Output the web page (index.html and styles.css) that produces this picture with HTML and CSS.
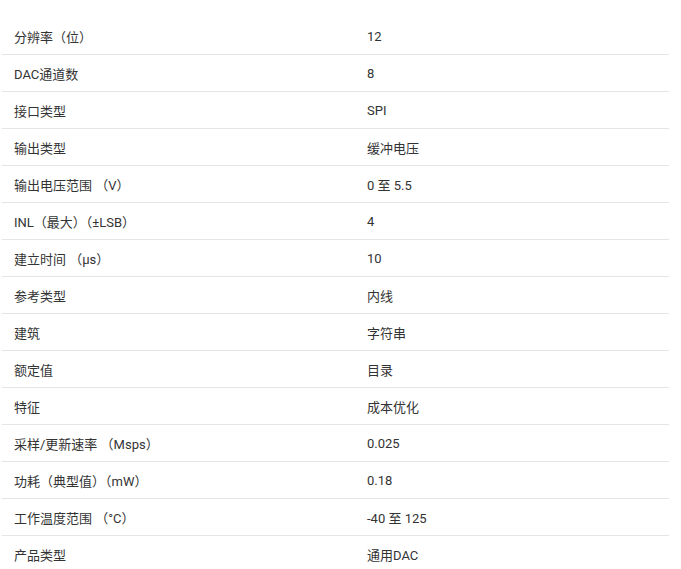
FILE: index.html
```html
<!DOCTYPE html>
<html lang="zh-CN">
<head>
<meta charset="utf-8">
<link rel="stylesheet" href="styles.css">
</head>
<body>
<div class="spec-table">
  <div class="row"><div class="label">分辨率（位）</div><div class="value">12</div></div>
  <div class="row"><div class="label">DAC通道数</div><div class="value">8</div></div>
  <div class="row"><div class="label">接口类型</div><div class="value">SPI</div></div>
  <div class="row"><div class="label">输出类型</div><div class="value">缓冲电压</div></div>
  <div class="row"><div class="label">输出电压范围 （V）</div><div class="value">0 至 5.5</div></div>
  <div class="row"><div class="label">INL（最大）（±LSB）</div><div class="value">4</div></div>
  <div class="row"><div class="label">建立时间 （μs）</div><div class="value">10</div></div>
  <div class="row"><div class="label">参考类型</div><div class="value">内线</div></div>
  <div class="row"><div class="label">建筑</div><div class="value">字符串</div></div>
  <div class="row"><div class="label">额定值</div><div class="value">目录</div></div>
  <div class="row"><div class="label">特征</div><div class="value">成本优化</div></div>
  <div class="row"><div class="label">采样/更新速率 （Msps）</div><div class="value">0.025</div></div>
  <div class="row"><div class="label">功耗（典型值）（mW）</div><div class="value">0.18</div></div>
  <div class="row"><div class="label">工作温度范围 （°C）</div><div class="value">-40 至 125</div></div>
  <div class="row"><div class="label">产品类型</div><div class="value">通用DAC</div></div>
</div>
</body>
</html>
```
FILE: styles.css
```css
html, body {
  margin: 0;
  padding: 0;
  background: #ffffff;
}
body {
  font-family: Roboto, "Noto Sans CJK SC", sans-serif;
  font-size: 13px;
  color: #333333;
}
.spec-table {
  margin: 18px 0 0 2px;
  width: 667px;
}
.row {
  display: grid;
  grid-template-columns: 353px 1fr;
  height: 36px;
  align-items: center;
  border-bottom: 1px solid #e5e5e5;
}
.label, .value {
  padding-left: 12px;
  white-space: nowrap;
}
```
